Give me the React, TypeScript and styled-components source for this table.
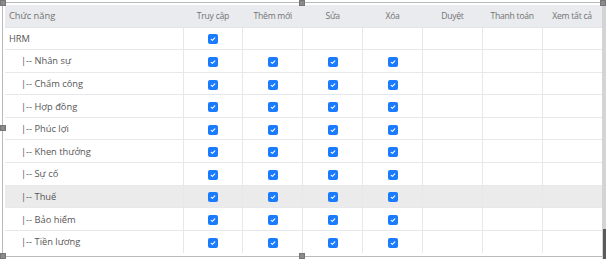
import React from "react";
import styled, { createGlobalStyle } from "styled-components";

const Global = createGlobalStyle`
  html, body { margin: 0; padding: 0; background: #fff; overflow: hidden; }
  * { box-sizing: border-box; }
`;

const Stage = styled.div`
  position: relative;
  width: 606px;
  height: 259px;
  display: flex;
  padding: 2px 0 2px 2px;
  font-family: "Open Sans", "Liberation Sans", sans-serif;
`;

const Frame = styled.div`
  flex: 1;
  border-top: 1px solid #b9b9b9;
  border-left: 1px solid #b9b9b9;
  border-bottom: 1px solid #b9b9b9;
  padding: 2px 0 0 2px;
  overflow: hidden;
`;

const Scrollbar = styled.div`
  width: 4px;
  margin-top: -2px;
  margin-bottom: -2px;
  background: #d4d4d4;
  display: flex;
  flex-direction: column;
  justify-content: flex-end;
`;

const Thumb = styled.div`
  height: 30px;
  background: #5a5a5a;
  margin-left: 1px;
`;

const Handle = styled.div<{ $x: number; $y: number }>`
  position: absolute;
  left: ${(p) => p.$x}px;
  top: ${(p) => p.$y}px;
  width: 6px;
  height: 6px;
  background: #8a8a8a;
  border: 1px solid #777;
`;

const Table = styled.table`
  width: 597px;
  border-collapse: collapse;
  table-layout: fixed;
  font-size: 9.3px;
`;

const Th = styled.th<{ $left?: boolean }>`
  height: 22px;
  background: #e9ebee;
  color: #727272;
  font-weight: 400;
  font-size: ${(p) => (p.$left ? "9.3px" : "8.6px")};
  letter-spacing: ${(p) => (p.$left ? "0" : "-0.25px")};
  text-align: ${(p) => (p.$left ? "left" : "center")};
  padding: 0 0 0 ${(p) => (p.$left ? "4px" : "0")};
  border-bottom: 1px solid #e3e5e8;
`;

const Tr = styled.tr<{ $hover?: boolean }>`
  background: ${(p) => (p.$hover ? "#ebebeb" : "#fff")};
`;

const Td = styled.td<{ $indent?: boolean }>`
  height: 22.6px;
  padding: 0 0 0 ${(p) => (p.$indent ? "16px" : "4px")};
  color: #555;
  border-top: 1px solid #e6e8eb;
  border-left: 1px solid #e6e8eb;
  &:first-child { border-left: none; }
`;

const CheckCell = styled.td`
  height: 22.6px;
  padding: 0;
  text-align: center;
  vertical-align: middle;
  border-top: 1px solid #e6e8eb;
  border-left: 1px solid #e6e8eb;
`;

const Box = styled.span`
  display: inline-flex;
  align-items: center;
  justify-content: center;
  width: 10px;
  height: 10px;
  border-radius: 2px;
  background: #1a7bff;
  vertical-align: middle;
`;

const Check = () => (
  <Box>
    <svg width="6" height="6" viewBox="0 0 6 6">
      <path d="M1.2 3.3 L2.4 4.3 L4.8 1.8" fill="none" stroke="#fff" strokeWidth="1.1" strokeLinecap="round" strokeLinejoin="round" />
    </svg>
  </Box>
);

const headers = ["Truy cập", "Thêm mới", "Sửa", "Xóa", "Duyệt", "Thanh toán", "Xem tất cả"];

type Row = { name: string; indent: boolean; checks: boolean[]; hover?: boolean };

const full = [true, true, true, true, false, false, false];
const rows: Row[] = [
  { name: "HRM", indent: false, checks: [true, false, false, false, false, false, false] },
  { name: "|-- Nhân sự", indent: true, checks: full },
  { name: "|-- Chấm công", indent: true, checks: full },
  { name: "|-- Hợp đồng", indent: true, checks: full },
  { name: "|-- Phúc lợi", indent: true, checks: full },
  { name: "|-- Khen thưởng", indent: true, checks: full },
  { name: "|-- Sự cố", indent: true, checks: full },
  { name: "|-- Thuế", indent: true, checks: full, hover: true },
  { name: "|-- Bảo hiểm", indent: true, checks: full },
  { name: "|-- Tiền lương", indent: true, checks: full },
];

const handles = [
  [0, 0], [299, 0], [600, 0], [0, 125], [0, 253], [299, 253],
];

export default function App() {
  return (
    <>
      <Global />
      <Stage>
        <Frame>
          <Table>
            <colgroup>
              <col style={{ width: 178 }} />
              {headers.map((h) => (
                <col key={h} style={{ width: 59.86 }} />
              ))}
            </colgroup>
            <thead>
              <tr>
                <Th $left>Chức năng</Th>
                {headers.map((h) => (
                  <Th key={h}>{h}</Th>
                ))}
              </tr>
            </thead>
            <tbody>
              {rows.map((r) => (
                <Tr key={r.name} $hover={r.hover}>
                  <Td $indent={r.indent}>{r.name}</Td>
                  {r.checks.map((c, i) => (
                    <CheckCell key={i}>{c ? <Check /> : null}</CheckCell>
                  ))}
                </Tr>
              ))}
            </tbody>
          </Table>
        </Frame>
        <Scrollbar>
          <Thumb />
        </Scrollbar>
        {handles.map(([x, y]) => (
          <Handle key={`${x}-${y}`} $x={x} $y={y} />
        ))}
      </Stage>
    </>
  );
}
